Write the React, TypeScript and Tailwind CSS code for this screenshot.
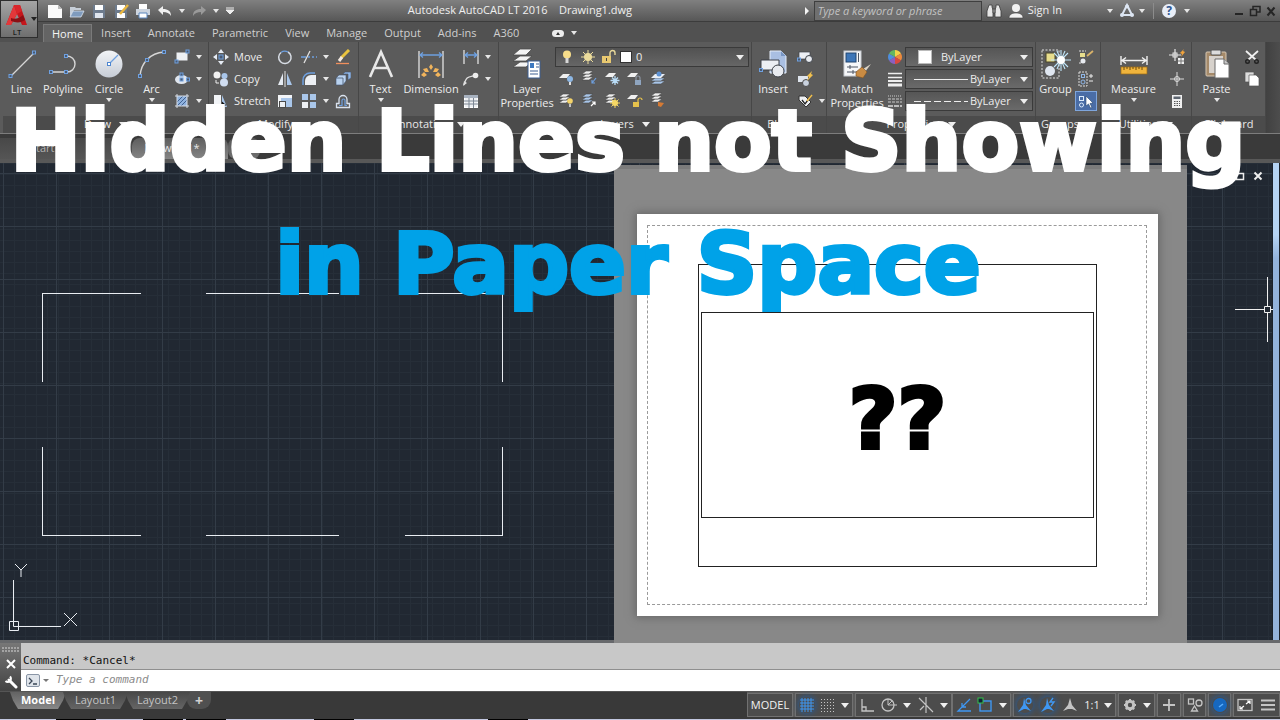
import type { ReactNode } from "react";

const blue = "#6ea0e0";
const pale = "#d9e2ee";

function Svg({ w = 16, h = 16, children }: { w?: number; h?: number; children: ReactNode }) {
  return (
    <svg width={w} height={h} viewBox={`0 0 ${w} ${h}`} fill="none" className="shrink-0" aria-hidden="true">
      {children}
    </svg>
  );
}

function Caret() {
  return (
    <Svg w={6} h={4}>
      <path d="M0 0h6L3 4z" fill="#e6e6e6" />
    </Svg>
  );
}

function BigCaret() {
  return (
    <Svg w={8} h={5}>
      <path d="M0 0h8L4 5z" fill="#efefef" />
    </Svg>
  );
}

// small square grip used on most geometry icons
function Grip({ x, y }: { x: number; y: number }) {
  return <rect x={x - 1.5} y={y - 1.5} width="3" height="3" fill="#4b5a70" stroke={blue} />;
}

function Sheets({ y = 0, color = "#f0f0f0" }: { y?: number; color?: string }) {
  return (
    <g fill={color} stroke="#4a4a4a" strokeWidth=".6">
      <path d={`M1 ${y + 11}l4-3h7l-4 3z`} />
      <path d={`M1 ${y + 8}l4-3h7l-4 3z`} />
      <path d={`M1 ${y + 5}l4-3h7l-4 3z`} />
    </g>
  );
}

/* ---------- large ribbon icons ---------- */

const LineIcon = (
  <Svg w={30} h={30}>
    <path d="M4 27L27 4" stroke="#d6d6d6" strokeWidth="1.3" />
    <Grip x={3.5} y={27} />
    <Grip x={27} y={3.5} />
  </Svg>
);

const PolylineIcon = (
  <Svg w={30} h={30}>
    <path d="M3 23h16a8 8 0 0 0 0-16" stroke="#d6d6d6" strokeWidth="1.4" />
    <Grip x={3} y={23} />
    <Grip x={18} y={23} />
    <Grip x={18} y={7} />
  </Svg>
);

const CircleIcon = (
  <Svg w={30} h={30}>
    <defs>
      <linearGradient id="disc" x1="0" y1="0" x2="0" y2="1">
        <stop offset="0" stopColor="#f2f4f7" />
        <stop offset="1" stopColor="#c6ccd6" />
      </linearGradient>
    </defs>
    <circle cx="15" cy="15" r="13.5" fill="url(#disc)" />
    <path d="M15 15l9-9" stroke={blue} strokeWidth="1.2" />
    <rect x="13.5" y="13.5" width="3" height="3" fill="#fff" stroke="#4d86d0" />
  </Svg>
);

const ArcIcon = (
  <Svg w={30} h={30}>
    <path d="M3 27C4 14 13 4 27 3" stroke="#d6d6d6" strokeWidth="1.4" />
    <Grip x={3} y={27} />
    <Grip x={10} y={11} />
    <Grip x={27} y={3} />
  </Svg>
);

const TextIcon = (
  <Svg w={28} h={30}>
    <path d="M3 28L14 3l11 25M7 19h14" stroke="#e8e8e8" strokeWidth="2.6" />
  </Svg>
);

const DimensionIcon = (
  <Svg w={30} h={30}>
    <path d="M3 2v27M27 2v27" stroke="#d8d8d8" strokeWidth="1.4" />
    <path d="M4 6h22M7 3.500L4 6l3 2.500M23 3.500L26 6l-3 2.500" stroke={blue} strokeWidth="1.3" />
    <g fill="#f1b45c">
      <path d="M13 18l2-3 2 3-2 3zM7 20l4-1 2 4-4 0zM23 20l-4-1-2 4 4 0zM5 26l3-3 3 3-3 2zM25 26l-3-3-3 3 3 2z" />
    </g>
  </Svg>
);

const LayerPropsIcon = (
  <Svg w={32} h={32}>
    <g fill="#f4f4f4" stroke="#4a4a4a" strokeWidth=".8">
      <path d="M2 19l7-5h12l-6 5z" />
      <path d="M2 13l7-5h12l-6 5z" />
      <path d="M2 7l7-6h12l-6 6z" />
    </g>
    <rect x="17" y="13" width="12" height="17" fill="#fff" stroke="#3c5f92" />
    <rect x="19" y="15" width="4" height="5" fill="#3c78c0" />
    <path d="M25 16h3M25 19h3M19 23h8M19 26h8" stroke="#3c5f92" strokeWidth="1.200" />
  </Svg>
);

const InsertIcon = (
  <Svg w={30} h={30}>
    <path d="M12 2h11l5 5v17H12z" fill="#a9bfe2" stroke="#e5edf8" />
    <path d="M23 2v5h5" fill="#7896c4" />
    <path d="M3 11h18v10H3z" fill="#eceff4" stroke="#3c4148" />
    <circle cx="20" cy="22" r="6" fill="#e8ebf0" stroke="#3c4148" />
    <Grip x={3} y={21} />
  </Svg>
);

const MatchIcon = (
  <Svg w={30} h={30}>
    <rect x="2" y="2" width="17" height="25" fill="#f6f7f9" stroke="#c8ccd2" />
    <rect x="4" y="4" width="10" height="9" fill="#3d76b8" stroke="#20446f" />
    <path d="M16.500 4v9M5 18h11M5 23h10M8 16v4M11 21v4" stroke="#4d5562" />
    <path d="M29 15l-8 5 2 3z" fill="#d9d2c5" />
    <path d="M14 23l6-5 5 5-4 6-7-2z" fill="#c98b43" stroke="#7c5020" strokeWidth=".6" />
  </Svg>
);

const GroupIcon = (
  <Svg w={30} h={30}>
    <rect x="1" y="1" width="17" height="28" stroke="#e0e0e0" strokeDasharray="2 1.500" />
    <rect x="5" y="4" width="9" height="9" fill="#e7dd8d" stroke="#49452a" />
    <circle cx="9" cy="22" r="5" fill="#dfe6f0" />
    <g stroke="#bfe6fb" strokeWidth="1.100">
      <path d="M20 1v21M10 11h20M13 4l14 14M27 4L13 18M16 2l8 18M24 2l-8 18" />
    </g>
    <circle cx="20" cy="11" r="4" fill="#fff" />
  </Svg>
);

const MeasureIcon = (
  <Svg w={30} h={30}>
    <path d="M2 7v9M28 7v9M3 11.500h24M7 8.500l-4 3 4 3M23 8.500l4 3-4 3" stroke="#f0f0f0" strokeWidth="1.400" />
    <rect x="2" y="18" width="26" height="7" fill="#f0b43c" stroke="#9c6a14" strokeWidth=".7" />
    <path d="M5 18v3M8 18v2M11 18v3M14 18v2M17 18v3M20 18v2M23 18v3" stroke="#6d4a0c" />
  </Svg>
);

const PasteIcon = (
  <Svg w={30} h={30}>
    <rect x="4" y="3" width="20" height="24" rx="1" fill="#a58a6a" stroke="#d7c8b4" />
    <rect x="9" y="1" width="10" height="5" rx="1" fill="#dcdcdc" stroke="#555" />
    <path d="M7 7h14v17H7z" fill="#d7d2cc" />
    <path d="M13 10h9l5 5v14H13z" fill="#fff" stroke="#6b6b6b" />
    <path d="M22 10v5h5" fill="#c9c9c9" stroke="#6b6b6b" />
  </Svg>
);

/* ---------- small ribbon icons ---------- */

const RectSmall = (
  <Svg>
    <rect x="2.500" y="3.500" width="11" height="8" fill="#edf0f4" />
    <Grip x={2.5} y={12.5} />
    <Grip x={13.5} y={2.5} />
  </Svg>
);
const EllipseSmall = (
  <Svg>
    <ellipse cx="7.500" cy="8.500" rx="6.500" ry="4.500" fill="#dfe5ee" />
    <Grip x={7.5} y={8.5} />
    <Grip x={7.5} y={3.5} />
    <Grip x={14} y={8.5} />
  </Svg>
);
const HatchSmall = (
  <Svg>
    <rect x="3" y="3" width="10" height="10" fill="#8fb2df" />
    <path d="M3 9l6-6M3 13L13 3M7 13l6-6" stroke="#41618f" />
    <path d="M3 1v14M13 1v14M1 3h14M1 13h14" stroke="#d8dde5" />
  </Svg>
);
const MoveSmall = (
  <Svg>
    <path d="M8 0l3 4H5zM8 16l3-4H5zM0 8l4-3v6zM16 8l-4-3v6z" fill="#e7edf5" />
    <rect x="6" y="6" width="4" height="4" fill="#4b5a70" stroke={blue} />
  </Svg>
);
const CopySmall = (
  <Svg>
    <circle cx="4" cy="4" r="3.500" fill="#f2f2f2" />
    <circle cx="11.500" cy="5" r="3" fill="#a9c6ea" />
    <circle cx="11" cy="11.500" r="4" fill="#cfdcf0" />
    <path d="M3 9v3h3" stroke="#f0f0f0" />
  </Svg>
);
const StretchSmall = (
  <Svg>
    <path d="M1 2h7v12H1z" fill="#f2f4f7" />
    <path d="M9 2l5 12H9z" fill="#a9c6ea" />
    <path d="M3 11h6V8.500l4 3.500-4 3.500V13H3z" fill="#111" />
  </Svg>
);
const RotateSmall = (
  <Svg>
    <path d="M4 3.500a6.200 6.200 0 1 0 7-.5" stroke="#d8dde5" strokeWidth="1.500" />
    <path d="M4 3.500c2-1.500 5-1.500 7-.5" stroke={blue} strokeWidth="1.200" />
  </Svg>
);
const TrimSmall = (
  <Svg w={18}>
    <path d="M1 8h5M8 8h2M12 8h2M16 8h1" stroke={blue} strokeWidth="1.500" />
    <path d="M4 14L10 2" stroke="#e4e4e4" strokeWidth="1.200" />
  </Svg>
);
const EraseSmall = (
  <Svg>
    <path d="M14 1L6 9" stroke="#e9c33e" strokeWidth="3" />
    <path d="M7 8l-3 4" stroke="#f3e9e2" strokeWidth="3" />
    <path d="M1 14.500h13" stroke="#f08f5c" strokeWidth="1.300" />
  </Svg>
);
const MirrorSmall = (
  <Svg>
    <path d="M6 2v12H1z" fill="#e6ebf2" />
    <path d="M10 2v12h5z" fill="#a9c6ea" />
    <path d="M8 0v16" stroke="#e4e4e4" />
  </Svg>
);
const FilletSmall = (
  <Svg>
    <path d="M2 14V9a7 7 0 0 1 7-7h5" stroke={blue} strokeWidth="1.500" />
    <path d="M4 14V10a6 6 0 0 1 6-6h5v10z" fill="#edf0f4" />
  </Svg>
);
const ExplodeSmall = (
  <Svg>
    <path d="M1 7l3-3h7v6l-3 4H1z" fill="#b9d2ef" stroke="#45566e" strokeWidth=".6" />
    <path d="M8 3l2-2h6v6l-3 2V3z" fill="#8fb6e6" stroke="#45566e" strokeWidth=".6" />
    <path d="M1 7h7v7" stroke="#45566e" strokeWidth=".8" />
  </Svg>
);
const ScaleSmall = (
  <Svg>
    <path d="M1 2h14v12H1z" fill="#a9c6ea" />
    <path d="M1 2h14v3H4v9H1z" fill="#f2f4f7" />
    <rect x="2.500" y="8.500" width="6" height="6" fill="#edf0f4" stroke="#4a4a4a" />
  </Svg>
);
const ArraySmall = (
  <Svg>
    <rect x="1" y="1" width="6" height="6" fill="#a9c6ea" />
    <rect x="9" y="1" width="6" height="6" fill="#a9c6ea" />
    <rect x="1" y="9" width="6" height="6" fill="#edf0f4" />
    <rect x="9" y="9" width="6" height="6" fill="#a9c6ea" />
  </Svg>
);
const OffsetSmall = (
  <Svg>
    <path d="M1.500 14.500v-4H4V6.500a4 4 0 0 1 8 0v4h2.500v4z" stroke={pale} strokeWidth="1.300" />
    <path d="M4 12.500h3V7.500a1.500 1.500 0 0 1 3 0v5h2" stroke={blue} strokeWidth="1.200" />
  </Svg>
);
const DimSmall = (
  <Svg>
    <path d="M1 1v14M15 1v14" stroke="#e0e0e0" strokeWidth="1.300" />
    <path d="M2 6h12M5 3.500L2 6l3 2.500M11 3.500L14 6l-3 2.500" stroke={blue} strokeWidth="1.300" />
  </Svg>
);
const LeaderSmall = (
  <Svg>
    <path d="M1 14c2-8 4-8 9-9" stroke="#e0e0e0" strokeWidth="1.300" />
    <path d="M0 15l1-5 3 2z" fill="#e0e0e0" />
    <circle cx="12.500" cy="4.500" r="2.800" fill="#eee" />
  </Svg>
);
const TableSmall = (
  <Svg>
    <rect x="1.500" y="2.500" width="13" height="12" fill="#eef0f3" stroke="#fff" />
    <rect x="1" y="2" width="14" height="3" fill="#a7b1bf" />
    <path d="M1 8h14M1 11h14M6 5v10M10.500 5v10" stroke="#7d8794" />
  </Svg>
);

const LayerOff = (
  <Svg>
    <path d="M1 8l4-4h7l-3 4z" fill="#f0f0f0" />
    <circle cx="12" cy="9" r="3" fill="#8db7e4" />
    <path d="M12 12v3" stroke="#ddd" strokeWidth="2" />
  </Svg>
);
const LayerIso = (
  <Svg>
    <Sheets y={-1} />
    <path d="M15 8l-4 5M11 10v3h3" stroke={blue} strokeWidth="1.200" />
  </Svg>
);
const LayerFreeze = (
  <Svg>
    <path d="M1 7l4-4h7l-3 4z" fill="#f0f0f0" />
    <path d="M11 6v9M6.500 10.500h9M8 7.500l6 6M14 7.500l-6 6" stroke="#b9dcf6" strokeWidth="1.300" />
  </Svg>
);
const LayerLock = (
  <Svg>
    <path d="M0 7l4-4h7l-3 4z" fill="#f0f0f0" />
    <path d="M9 10V8a2 2 0 0 1 4 0v2" stroke="#8a93a0" strokeWidth="1.200" />
    <rect x="8" y="10" width="6" height="5" fill="#8fa5c0" />
  </Svg>
);
const LayerCurrent = (
  <Svg>
    <g fill="#a9c6ea" stroke="#4a4a4a" strokeWidth=".6">
      <path d="M1 14l4-3h10l-4 3z" />
      <path d="M1 11l4-3h10l-4 3z" />
    </g>
    <path d="M1 8l4-4h10l-4 4z" fill="#e9eef5" />
    <circle cx="9" cy="4" r="2.500" fill="#5d92d4" />
  </Svg>
);
const LayerOn = (
  <Svg>
    <Sheets />
    <circle cx="12" cy="9" r="2.800" fill="#f3d36a" />
    <path d="M12 12v3" stroke="#ddd" strokeWidth="1.600" />
  </Svg>
);
const LayerUniso = (
  <Svg>
    <Sheets color="#a9c6ea" />
    <path d="M10 14l4-4M11 10h3v3" stroke="#fff" strokeWidth="1.200" />
  </Svg>
);
const LayerThaw = (
  <Svg>
    <Sheets />
    <circle cx="11" cy="11" r="3" fill="#f6d864" />
    <path d="M11 6v10M6 11h10M7.500 7.500l7 7M14.500 7.500l-7 7" stroke="#f6d864" />
  </Svg>
);
const LayerUnlock = (
  <Svg>
    <path d="M0 7l4-4h7l-3 4z" fill="#f0f0f0" />
    <path d="M11 10V8a2 2 0 0 1 4 0" stroke="#e6c24c" strokeWidth="1.200" />
    <rect x="6" y="10" width="6" height="5" fill="#e6c24c" />
  </Svg>
);
const LayerMatch = (
  <Svg>
    <Sheets y={-1} />
    <path d="M8 10l6 1-3 4-3-1z" fill="#d57a34" />
  </Svg>
);

const BlockCreate = (
  <Svg>
    <rect x="2" y="3" width="11" height="7" fill="#eceff4" stroke="#3c4148" strokeWidth=".7" />
    <circle cx="12" cy="10" r="3.500" fill="#e8ebf0" stroke="#3c4148" />
    <Grip x={2} y={10.5} />
  </Svg>
);
const BlockEdit = (
  <Svg>
    <rect x="1" y="5" width="10" height="6" fill="#dfe5ee" />
    <circle cx="9" cy="12" r="3.500" fill="#c9d2df" stroke="#4a4a4a" />
    <path d="M15 0l-5 5 2 1-2 4 6-6-2-1z" fill="#f2c14e" />
  </Svg>
);
const BlockAttr = (
  <Svg>
    <path d="M2 3h6l6 6-5 5-7-7z" fill="#eef0f3" stroke="#333" />
    <path d="M5 7l3 4 6-8" stroke="#222" strokeWidth="1.300" />
    <path d="M15 2l-5 6" stroke="#f2c14e" strokeWidth="1.500" />
  </Svg>
);

const GroupEdit = (
  <Svg>
    <path d="M1 2h7M1 14h2" stroke="#ddd" strokeDasharray="2 1" />
    <rect x="2" y="4" width="5" height="4" fill="#e7dd8d" />
    <circle cx="5" cy="12" r="2.500" fill="#e8ebf0" />
    <path d="M15 2L9 7" stroke="#d8b26a" strokeWidth="1.800" />
  </Svg>
);
const Ungroup = (
  <Svg>
    <rect x="1" y="1" width="8" height="14" stroke="#ddd" strokeDasharray="2 1" />
    <rect x="3.500" y="3.500" width="3" height="3" stroke="#8fb6e6" />
    <circle cx="5" cy="11" r="2" stroke="#8fb6e6" />
    <path d="M11 5h4M13 3v4M11 10h4" stroke="#eee" />
  </Svg>
);
const GroupSelect = (
  <Svg>
    <rect x="1.500" y="3.500" width="4" height="4" stroke="#dcebfa" />
    <circle cx="3.500" cy="12" r="2" stroke="#dcebfa" />
    <path d="M8 3l7 7-3 .5 2 4-1.500.5-2-4L8 13z" fill="#fff" stroke="#29486f" strokeWidth=".6" />
  </Svg>
);
const QuickCalc = (
  <Svg>
    <path d="M0 6h12M6 0v12" stroke="#e6e6e6" strokeWidth="1.200" />
    <rect x="4" y="4" width="4" height="4" stroke="#e6e6e6" />
    <path d="M15 0l-4 4 2 1-1 3 4-5-2-1z" fill="#f2a33c" />
    <rect x="9" y="9" width="6" height="6" fill="#eee" />
    <path d="M9 12h6M12 9v6" stroke="#777" />
  </Svg>
);
const PointIcon = (
  <Svg>
    <path d="M1 8h14M8 1v14" stroke="#dcdcdc" />
    <circle cx="8" cy="8" r="2.500" stroke="#dcdcdc" />
  </Svg>
);
const CalcIcon = (
  <Svg>
    <rect x="3" y="2" width="10" height="13" fill="#f0f0f0" />
    <rect x="4.500" y="3.500" width="7" height="2.500" fill="#5d6570" />
    <path d="M5 8.500h6M5 10.500h6M5 12.500h6" stroke="#555" strokeDasharray="1.500 1" />
  </Svg>
);
const CutIcon = (
  <Svg>
    <path d="M2 2l10 9M14 2L4 11" stroke="#f0f0f0" strokeWidth="1.800" />
    <circle cx="3.500" cy="12.500" r="1.800" stroke="#222" strokeWidth="1.400" />
    <circle cx="12.500" cy="12.500" r="1.800" stroke="#222" strokeWidth="1.400" />
  </Svg>
);
const CopyClip = (
  <Svg>
    <path d="M1 1h9v10H1z" fill="#dcdcdc" stroke="#555" strokeWidth=".7" />
    <path d="M5 4h7l3 3v8H5z" fill="#fff" stroke="#555" strokeWidth=".7" />
  </Svg>
);

/* ---------- ribbon building blocks ---------- */

function Panel({ title, width, caret = true, corner, children }: {
  title: string;
  width: string;
  caret?: boolean;
  corner?: boolean;
  children: ReactNode;
}) {
  return (
    <section className={`flex shrink-0 flex-col border-r border-[#474747] ${width}`}>
      <div className="flex h-[74px] pt-1">{children}</div>
      <div className="flex h-[17px] items-center justify-center gap-2 bg-[#4b4b4b] text-[#e8e8e8]">
        <span className={corner ? "ml-auto" : ""}>{title}</span>
        {caret && <BigCaret />}
        {corner && (
          <span className="mr-1 ml-auto">
            <Svg w={8} h={8}>
              <path d="M1 1l5 5M7 3v4H3" stroke="#ddd" />
            </Svg>
          </span>
        )}
      </div>
    </section>
  );
}

function Big({ label, icon, width, caret }: { label: string; icon: ReactNode; width: string; caret?: boolean }) {
  return (
    <button type="button" className={`flex shrink-0 flex-col items-center text-center leading-[14px] text-[#ededed] ${width}`}>
      <span className="flex h-9 items-center">{icon}</span>
      <span>{label}</span>
      {caret && <span className="flex h-2 items-center"><Caret /></span>}
    </button>
  );
}

function Small({ label, icon, caret, on }: { label: string; icon: ReactNode; caret?: boolean; on?: boolean }) {
  return (
    <button type="button" aria-label={label} className="flex h-[22px] items-center">
      <span className={`flex h-5 w-[22px] items-center justify-center ${on ? "border border-[#7fa6dc] bg-[#4a6da6]" : ""}`}>{icon}</span>
      {caret && <span className="flex w-3 justify-center"><Caret /></span>}
    </button>
  );
}

function PropSelect({ label, swatch }: { label: string; swatch: ReactNode }) {
  return (
    <label className="flex h-[20px] items-center border border-[#3a3a3a] bg-linear-to-b from-[#565656] to-[#6a6a6a] pr-1 text-[#ededed]">
      {swatch}
      <select aria-label={label} className="min-w-0 flex-1 appearance-none bg-transparent outline-none">
        <option>ByLayer</option>
      </select>
      <BigCaret />
    </label>
  );
}

const menuTabs = ["Insert", "Annotate", "Parametric", "View", "Manage", "Output", "Add-ins", "A360"];

function TitleBar() {
  return (
    <div className="flex h-[22px] items-center border-b border-[#3c3c3c] bg-linear-to-b from-[#808080] to-[#575757] text-[#f0f0f0]">
      <div className="flex items-center pl-[6px]">
        <QatButton label="New"><path d="M1 2h10l4 4v9H1z" fill="#fafafa" /><path d="M11 2v4h4" fill="#bbb" /></QatButton>
        <QatButton label="Open"><path d="M1 4h5l1 1h5v2H5l-4 7z" fill="#c6ced8" /><path d="M4 8h11l-3 6H1z" fill="#7f9bbd" stroke="#d9e2ee" strokeWidth=".8" /></QatButton>
        <QatButton label="Save"><path d="M2 2h12v13H2z" fill="#6d7b8d" /><path d="M4 2h8v5H4z" fill="#fff" /><path d="M4 10h8v5H4z" fill="#dfe5ee" /></QatButton>
        <QatButton label="Save As"><path d="M2 2h12v13H2z" fill="#6d7b8d" /><path d="M4 2h8v5H4zM4 10h8v5H4z" fill="#fff" /><path d="M15 2l-8 9" stroke="#e9b63e" strokeWidth="2.500" /></QatButton>
        <QatButton label="Plot"><path d="M4 1h8v5H4z" fill="#fff" /><path d="M1 6h14v6H1z" fill="#cdd5df" /><path d="M4 10h8v5H4z" fill="#fff" stroke="#5b86bd" /></QatButton>
        <QatButton label="Undo"><path d="M1 7l5-4v3c5 0 8 2 8 7-2-3-4-4-8-4v3z" fill="#f0f0f0" /></QatButton>
        <span className="flex w-3 justify-center"><Caret /></span>
        <QatButton label="Redo"><path d="M15 7l-5-4v3c-5 0-8 2-8 7 2-3 4-4 8-4v3z" fill="#9a9a9a" /></QatButton>
        <span className="flex w-3 justify-center"><Caret /></span>
        <button type="button" aria-label="Customize toolbar" className="flex w-4 justify-center">
          <Svg w={8} h={8}><path d="M0 1h8M0 3h8l-4 4z" stroke="#eee" fill="#eee" /></Svg>
        </button>
      </div>
      <h2 className="flex-1 text-center whitespace-pre">Autodesk AutoCAD LT 2016    Drawing1.dwg</h2>
      <Svg w={12} h={10}><path d="M3 1l4 4-4 4z" fill="#f4f4f4" /></Svg>
      <input
        aria-label="Search"
        placeholder="Type a keyword or phrase"
        className="h-5 w-[168px] border border-[#3f3f3f] bg-[#6f6f6f] px-[3px] italic outline-none placeholder:text-[#c2c2c2]"
      />
      <button type="button" aria-label="Search" className="ml-1 flex w-4 justify-center">
        <Svg><path d="M3 2h3v2l1 3v7H1V8zM10 2h3l2 6v6H9V7l1-3zM7 6h2v4H7z" fill="#e6e6e6" stroke="#3c3c3c" strokeWidth=".8" /></Svg>
      </button>
      <button type="button" className="ml-[6px] flex items-center gap-1">
        <Svg><circle cx="8" cy="5" r="4" fill="#f2f2f2" /><path d="M1 15c0-4 4-5 7-5s7 1 7 5z" fill="#f2f2f2" stroke="#444" strokeWidth=".6" /></Svg>
        Sign In
      </button>
      <span className="ml-[45px]"><Caret /></span>
      <button type="button" aria-label="Autodesk 360" className="ml-[6px] flex items-center gap-1">
        <Svg><path d="M8 2l5 10H3z" stroke="#dce5f2" strokeWidth="2" /><circle cx="8" cy="3.500" r="2" fill="#dce5f2" /><circle cx="3" cy="12" r="2" fill="#dce5f2" /><circle cx="13" cy="12" r="2" fill="#dce5f2" /></Svg>
        <Caret />
      </button>
      <span className="ml-2 h-4 border-l border-[#8c8c8c]" />
      <button type="button" className="ml-2 flex items-center gap-2" aria-label="Help">
        <span className="flex h-[14px] w-[14px] items-center justify-center rounded-full bg-[#e8eef8] text-[12px] leading-none font-bold text-[#2f5590]">?</span>
        <Caret />
      </button>
      <div className="ml-[44px] flex w-[46px] items-center justify-between pr-1">
        <button type="button" aria-label="Minimize"><Svg w={10} h={12}><path d="M1 9h8" stroke="#252525" strokeWidth="2" /></Svg></button>
        <button type="button" aria-label="Restore"><Svg w={12} h={12}><path d="M4 4V1.500h7V7H8M1.500 4.500h6v6h-6z" stroke="#252525" strokeWidth="1.500" /></Svg></button>
        <button type="button" aria-label="Close"><Svg w={10} h={12}><path d="M1.500 2.500l7 8M8.500 2.500l-7 8" stroke="#252525" strokeWidth="2" /></Svg></button>
      </div>
    </div>
  );
}

function QatButton({ label, children }: { label: string; children: ReactNode }) {
  return (
    <button type="button" aria-label={label} className="flex w-[22px] justify-center">
      <Svg>{children}</Svg>
    </button>
  );
}

function Header() {
  return (
    <header className="flex bg-[#515151]">
      <button
        type="button"
        aria-label="Application menu"
        className="flex h-[38px] w-[38px] shrink-0 items-center gap-[2px] border border-[#2e2e2e] bg-linear-to-b from-[#a5a5a5] to-[#6f6f6f] pl-1"
      >
        <span className="flex w-6 flex-col items-center text-[8px] leading-[9px] text-black">
          <Svg w={24} h={24}>
            <path d="M9 2h6l7 20h-5L12 11 6 22H1z" fill="#c4161c" />
            <path d="M9 2l3 9-6 11H1z" fill="#e2383a" />
            <path d="M6 15c4 2 9 0 12-3l2 5c-4 3-9 3-14 1z" fill="#8c0f14" />
            <path d="M9 2h6l2 6-5 3z" fill="#d8262b" />
          </Svg>
          LT
        </span>
        <Svg w={6} h={4}><path d="M0 0h6L3 4z" fill="#222" /></Svg>
      </button>
      <div className="min-w-0 flex-1">
        <TitleBar />
        <nav className="flex h-[20px] items-end gap-px pl-[5px] text-[#cfcfcf]">
          <button type="button" className="h-[18px] border border-b-0 border-[#7a7a7a] bg-[#646464] px-2 leading-[16px] text-[#f5f5f5]">Home</button>
          {menuTabs.map((t) => (
            <button key={t} type="button" className="h-[18px] px-2 leading-[18px]">{t}</button>
          ))}
          <button type="button" aria-label="Ribbon display" className="ml-6 flex h-[18px] items-center gap-[7px]">
            <span className="flex h-[7px] w-3 items-center justify-center rounded-sm bg-[#ededed]">
              <Svg w={4} h={3}><path d="M0 3h4L2 0z" fill="#333" /></Svg>
            </span>
            <Caret />
          </button>
        </nav>
      </div>
    </header>
  );
}

function Ribbon() {
  return (
    <div className="flex border-b border-[#7d7d7d] bg-[#5b5b5b] pl-[3px]">
      <Panel title="Draw" width="w-[206px]">
        <Big label="Line" icon={LineIcon} width="w-[37px]" />
        <Big label="Polyline" icon={PolylineIcon} width="w-[46px]" />
        <Big label="Circle" icon={CircleIcon} width="w-[46px]" caret />
        <Big label="Arc" icon={ArcIcon} width="w-[39px]" caret />
        <div>
          <Small label="Rectangle" icon={RectSmall} caret />
          <Small label="Ellipse" icon={EllipseSmall} caret />
          <Small label="Hatch" icon={HatchSmall} caret />
        </div>
      </Panel>

      <Panel title="Modify" width="w-[150px]">
        <div className="w-[65px] pl-1">
          <button type="button" className="flex h-[22px] items-center gap-[5px] text-[#ededed]">{MoveSmall}Move</button>
          <button type="button" className="flex h-[22px] items-center gap-[5px] text-[#ededed]">{CopySmall}Copy</button>
          <button type="button" className="flex h-[22px] items-center gap-[5px] text-[#ededed]">{StretchSmall}Stretch</button>
        </div>
        <div>
          <Small label="Rotate" icon={RotateSmall} />
          <Small label="Mirror" icon={MirrorSmall} />
          <Small label="Scale" icon={ScaleSmall} />
        </div>
        <div className="pl-[2px]">
          <Small label="Trim" icon={TrimSmall} caret />
          <Small label="Fillet" icon={FilletSmall} caret />
          <Small label="Array" icon={ArraySmall} caret />
        </div>
        <div>
          <Small label="Erase" icon={EraseSmall} />
          <Small label="Explode" icon={ExplodeSmall} />
          <Small label="Offset" icon={OffsetSmall} />
        </div>
      </Panel>

      <Panel title="Annotation" width="w-[140px]">
        <Big label="Text" icon={TextIcon} width="w-[43px]" caret />
        <Big label="Dimension" icon={DimensionIcon} width="w-[58px]" />
        <div>
          <Small label="Linear" icon={DimSmall} caret />
          <Small label="Leader" icon={LeaderSmall} caret />
          <Small label="Table" icon={TableSmall} />
        </div>
      </Panel>

      <Panel title="Layers" width="w-[253px]">
        <Big label="Layer Properties" icon={LayerPropsIcon} width="w-[56px]" />
        <div className="flex-1 pr-[2px]">
          <label className="mt-px flex h-[20px] items-center gap-1 border border-[#3a3a3a] bg-linear-to-b from-[#525252] to-[#666666] px-1 text-[#ededed]">
            <Svg><circle cx="7" cy="5.500" r="4" fill="#f7dd8a" /><path d="M5.500 9h3v5h-3z" fill="#d8d8d8" /></Svg>
            <Svg><circle cx="8" cy="8" r="4" fill="#ecdc9c" /><path d="M8 1v14M1 8h14M3 3l10 10M13 3L3 13" stroke="#ecdc9c" /></Svg>
            <Svg><path d="M10 7V4a2.500 2.500 0 0 1 5 0v2" stroke="#e8d89a" strokeWidth="1.400" /><rect x="2" y="7" width="9" height="7" fill="#e8c870" /><path d="M6.500 9v3" stroke="#444" /></Svg>
            <span className="h-3 w-3 border border-[#333] bg-white" />
            <select aria-label="Layer" className="min-w-0 flex-1 appearance-none bg-transparent outline-none">
              <option>0</option>
            </select>
            <BigCaret />
          </label>
          <div className="grid w-[115px] grid-cols-5">
            <Small label="Off" icon={LayerOff} />
            <Small label="Isolate" icon={LayerIso} />
            <Small label="Freeze" icon={LayerFreeze} />
            <Small label="Lock" icon={LayerLock} />
            <Small label="Make Current" icon={LayerCurrent} />
            <Small label="Turn All On" icon={LayerOn} />
            <Small label="Unisolate" icon={LayerUniso} />
            <Small label="Thaw All" icon={LayerThaw} />
            <Small label="Unlock" icon={LayerUnlock} />
            <Small label="Match Layer" icon={LayerMatch} />
          </div>
        </div>
      </Panel>

      <Panel title="Block" width="w-[75px]">
        <Big label="Insert" icon={InsertIcon} width="w-[42px]" />
        <div>
          <Small label="Create" icon={BlockCreate} />
          <Small label="Edit" icon={BlockEdit} />
          <Small label="Edit Attributes" icon={BlockAttr} caret />
        </div>
      </Panel>

      <Panel title="Properties" width="w-[209px]" corner>
        <Big label="Match Properties" icon={MatchIcon} width="w-[60px]" />
        <div className="w-[18px]">
          <span className="flex h-[22px] items-center">
            <Svg>
              <path d="M8 8V1a7 7 0 0 1 6 3.500z" fill="#f0d34a" />
              <path d="M8 8l6-3.500a7 7 0 0 1 0 7z" fill="#ef8a3c" />
              <path d="M8 8l6 3.500A7 7 0 0 1 8 15z" fill="#d8493f" />
              <path d="M8 8v7a7 7 0 0 1-6-3.500z" fill="#8b5fc0" />
              <path d="M8 8l-6 3.500a7 7 0 0 1 0-7z" fill="#4f8ede" />
              <path d="M8 8L2 4.500A7 7 0 0 1 8 1z" fill="#63b760" />
            </Svg>
          </span>
          <span className="flex h-[22px] items-center">
            <Svg><path d="M1 2.500h14M1 6.500h14" stroke="#eee" strokeWidth="1.500" /><path d="M1 10h14" stroke="#eee" strokeWidth="2" /><path d="M1 14h14" stroke="#eee" strokeWidth="3" /></Svg>
          </span>
          <span className="flex h-[22px] items-center">
            <Svg><path d="M1 3h14" stroke="#ccc" strokeDasharray="1 1" /><path d="M1 6h14M1 9h14" stroke="#ccc" strokeDasharray="3 1" /><path d="M1 13h14" stroke="#ddd" strokeDasharray="5 1" strokeWidth="1.500" /></Svg>
          </span>
        </div>
        <div className="flex w-[128px] flex-col gap-[2px] pt-px">
          <PropSelect label="Color" swatch={<span className="mr-[9px] ml-3 h-[14px] w-[14px] border border-[#bbb] bg-white" />} />
          <PropSelect label="Lineweight" swatch={<span className="mr-[2px] ml-2 w-[54px] border-t border-[#eee]" />} />
          <PropSelect
            label="Linetype"
            swatch={<span className="mr-[2px] ml-2"><Svg w={54} h={1}><path d="M0 .5h54" stroke="#eee" strokeDasharray="7 3" /></Svg></span>}
          />
        </div>
      </Panel>

      <Panel title="Groups" width="w-[65px]">
        <Big label="Group" icon={GroupIcon} width="w-[39px]" />
        <div>
          <Small label="Group Edit" icon={GroupEdit} />
          <Small label="Ungroup" icon={Ungroup} />
          <Small label="Group Selection" icon={GroupSelect} on />
        </div>
      </Panel>

      <Panel title="Utilities" width="w-[91px]">
        <Big label="Measure" icon={MeasureIcon} width="w-[65px]" caret />
        <div>
          <Small label="Quick Select" icon={QuickCalc} />
          <Small label="ID Point" icon={PointIcon} />
          <Small label="Calculator" icon={CalcIcon} />
        </div>
      </Panel>

      <Panel title="Clipboard" width="w-[74px]" caret={false}>
        <Big label="Paste" icon={PasteIcon} width="w-[49px]" caret />
        <div>
          <Small label="Cut" icon={CutIcon} />
          <Small label="Copy Clip" icon={CopyClip} />
        </div>
      </Panel>
      <div className="flex-1 bg-linear-to-r from-[#414141] to-[#4d4d4d]" />
    </div>
  );
}

function DocTabs() {
  return (
    <nav className="flex h-[29px] items-end border-b-4 border-[#585858] bg-[#3a3a3a] text-[#b4b4b4]">
      <button type="button" className="h-[21px] w-[132px] bg-linear-to-b from-[#484848] to-[#555555] pl-[30px] text-left">Start</button>
      <button type="button" className="h-[21px] w-[96px] rounded-t-[8px] bg-linear-to-b from-[#5e5e5e] to-[#858585] pr-4 text-[#e8e8e8]">Drawing1*</button>
      <button type="button" aria-label="New tab" className="h-[21px] w-8 rounded-[8px] bg-linear-to-b from-[#5a5a5a] to-[#707070]" />
    </nav>
  );
}

const gridBg =
  "bg-[#212832] bg-[linear-gradient(to_right,#333c47_1px,transparent_1px),linear-gradient(to_bottom,#333c47_1px,transparent_1px),linear-gradient(to_right,#262e38_1px,transparent_1px),linear-gradient(to_bottom,#262e38_1px,transparent_1px)] bg-[size:53px_53px,53px_53px,11px_11px,11px_11px] bg-[position:3px_0,0_10px,3px_0,0_0]";

function Canvas() {
  return (
    <main className={`relative z-10 flex-1 ${gridBg}`}>
      {/* model space geometry */}
      <svg className="absolute top-0 left-0" width="614" height="477" viewBox="0 163 614 477" fill="none">
        <g stroke="#e9edf2">
          <path d="M42 293.500h99M206 293.500h133M405 293.500h98M42 535.500h99M206 535.500h133M405 535.500h98" />
          <path d="M42.500 293v89M42.500 447v89M502.500 293v89M502.500 447v89" />
          <path d="M13.500 580v46.500H61M9.500 621.500h9v9h-9z" />
          <path d="M15 564l6 6 6-6M21 570v7M64 613l13 13M77 613l-13 13" />
        </g>
      </svg>

      {/* layout sheet */}
      <div className="absolute top-[2px] left-[614px] h-[478px] w-[573px] border-t-4 border-[#7b7b7b] bg-[#888888] pt-[45px] pl-[23px]">
        <div className="h-[402px] w-[521px] bg-white pt-[11px] pl-[10px] shadow-[0_0_8px_2px_#6a6a6a]">
          <div className="h-[380px] w-[500px] border border-dashed border-[#9a9a9a] pt-[38px] pl-[50px]">
            <div className="h-[303px] w-[399px] border border-[#222] px-[2px] pt-[47px]">
              <div className="flex h-[206px] items-center justify-center border border-[#222] pt-2 font-['DejaVu_Sans',sans-serif] text-[84px] leading-none font-bold text-black [-webkit-text-stroke:4px_#000]">
                ??
              </div>
            </div>
          </div>
        </div>
      </div>

      <div className="absolute top-0 right-0 h-full w-[8px] border-r border-l border-[#1b222b] bg-linear-to-b from-[#b5d3f3] from-15% to-[#93b3dc] to-20%" />
      <div className="absolute top-[5px] right-[17px] flex gap-2 text-[#eeeeee]">
        <button type="button" aria-label="Restore viewport"><Svg w={10} h={16}><path d="M1.500 5.500h7v6h-7z" stroke="#eee" strokeWidth="1.500" /></Svg></button>
        <button type="button" aria-label="Close viewport"><Svg w={10} h={16}><path d="M1.500 4.500l7 7M8.500 4.500l-7 7" stroke="#eee" strokeWidth="2" /></Svg></button>
      </div>
      <svg className="absolute top-[114px] right-0" width="46" height="66" viewBox="0 0 46 66" fill="none" stroke="#f0f0f0">
        <path d="M1 32.500h29M36 32.500h3M33.500 0v29M33.500 36v29M30.500 29.500h6v6h-6z" />
      </svg>
    </main>
  );
}

function CommandLine() {
  return (
    <section className="flex h-[51px] border-t-3 border-[#67696c] font-['DejaVu_Sans_Mono',monospace] text-[11px]">
      <div className="flex w-[21px] flex-col items-center justify-between bg-linear-to-b from-[#777] to-[#444] pt-1 pb-[2px]">
        <Svg w={17} h={5}><path d="M0 1h17M0 4h17" stroke="#b5b5b5" strokeWidth="1.500" strokeDasharray="2 1" /></Svg>
        <button type="button" aria-label="Close command line"><Svg w={10} h={10}><path d="M1 1l8 8M9 1l-8 8" stroke="#fff" strokeWidth="2" /></Svg></button>
        <button type="button" aria-label="Command settings"><Svg w={14} h={14}><path d="M5 5l7 7" stroke="#fff" strokeWidth="3" strokeLinecap="round" /><path d="M6 1.500a3 3 0 1 1-4.500 4.500" stroke="#fff" strokeWidth="2" /></Svg></button>
      </div>
      <div className="flex min-w-0 flex-1 flex-col">
        <p className="h-[27px] border-b border-[#8f8f8f] bg-[#c8c8c8] pt-[10px] pl-[2px] leading-[16px] text-[#111]">Command: *Cancel*</p>
        <label className="flex flex-1 items-center bg-white pl-[5px]">
          <span className="flex h-[13px] w-[14px] items-center justify-center rounded-[2px] border border-[#8a96a6] bg-[#dfe4ea]">
            <Svg w={10} h={8}><path d="M1 1l3 3-3 3M5 7h4" stroke="#3a4656" strokeWidth="1.300" /></Svg>
          </span>
          <span className="mx-[3px]"><Svg w={6} h={4}><path d="M0 0h6L3 3z" fill="#777" /></Svg></span>
          <input aria-label="Command" placeholder="Type a command" className="ml-1 flex-1 italic outline-none placeholder:text-[#8c8c8c]" />
        </label>
      </div>
    </section>
  );
}

const tabClip = "[clip-path:polygon(0_0,100%_0,calc(100%-3px)_50%,calc(100%-8px)_100%,8px_100%,3px_50%)]";

function LayoutTab({ label, active, width }: { label: string; active?: boolean; width: string }) {
  return (
    <button
      type="button"
      className={`-mr-[3px] flex h-[17px] items-center justify-center rounded-b-[4px] ${tabClip} ${width} ${
        active ? "bg-linear-to-b from-[#636363] to-[#888888] font-bold text-white" : "bg-linear-to-b from-[#484848] to-[#656565] text-[#c4c4c4]"
      }`}
    >
      {label}
    </button>
  );
}

function Cell({ children, width }: { children: ReactNode; width: string }) {
  return <div className={`flex h-6 items-center justify-around border border-[#717171] bg-[#4c4c4c] ${width}`}>{children}</div>;
}

function St({ label, children, glow }: { label: string; children: ReactNode; glow?: boolean }) {
  return (
    <button type="button" aria-label={label} className={glow ? "rounded-full shadow-[0_0_6px_#1d5ea8]" : ""}>
      <Svg>{children}</Svg>
    </button>
  );
}

const act = "#3f97f2";
const idle = "#c4c4c4";

function StatusBar() {
  return (
    <footer className="bg-[#393939]">
      <div className="flex h-[27px] items-start border-t border-[#555]">
        <div className="flex flex-1 pl-[10px]">
          <LayoutTab label="Model" active width="w-[56px]" />
          <LayoutTab label="Layout1" width="w-[65px]" />
          <LayoutTab label="Layout2" width="w-[65px]" />
          <button type="button" className="flex h-[17px] w-[24px] items-center justify-center rounded-b-[9px] bg-[#505050] text-[14px] font-bold text-[#d0d0d0]">+</button>
        </div>
        <div className="flex gap-[2px] bg-[#5c5c5c] pt-px">
          <Cell width="w-[46px]"><button type="button" className="text-[#f2f2f2]">MODEL</button></Cell>
          <Cell width="w-[58px]">
            <St label="Grid" glow><path d="M3 1v14M6 1v14M9 1v14M12 1v14M1 3h14M1 6h14M1 9h14M1 12h14" stroke={act} /></St>
            <St label="Snap"><path d="M1 2.500h14M1 5.500h14M1 8.500h14M1 11.500h14M1 14.500h14" stroke={idle} strokeDasharray="1 2" /></St>
            <BigCaret />
          </Cell>
          <div className="flex">
            <Cell width="w-[97px]">
              <St label="Ortho"><path d="M3 2v12h12M3 10h4v4" stroke={idle} strokeWidth="1.300" /></St>
              <St label="Polar"><circle cx="7" cy="8" r="6" stroke={idle} strokeWidth="1.300" /><path d="M7 2v6h9M7 8l4-4" stroke={idle} /></St>
              <BigCaret />
              <St label="Isodraft"><path d="M1 1l14 14M8 0v16M2 13l4-4" stroke={idle} strokeWidth="1.200" /></St>
              <BigCaret />
            </Cell>
            <Cell width="w-[59px]">
              <St label="Object Snap Tracking"><path d="M14 2L2 14h13M6 6v4h4" stroke={act} strokeWidth="1.300" /></St>
              <St label="Object Snap"><rect x="3" y="4" width="11" height="10" stroke={act} strokeWidth="1.400" /><rect x="1" y="1" width="5" height="5" fill="#123" stroke="#35c04a" /></St>
              <BigCaret />
            </Cell>
          </div>
          <Cell width="w-[103px]">
            <St label="Annotation Visibility" glow><path d="M7 1l2 7 5 6-5-2-2 0-6 3 5-7z" fill={act} /><circle cx="11.500" cy="4" r="2.500" stroke={act} strokeWidth="1.300" /></St>
            <St label="AutoScale" glow><path d="M7 1l2 7 5 6-5-2-2 0-6 3 5-7z" fill={act} /><path d="M13 1l-3 4h4l-3 4" stroke={act} strokeWidth="1.400" /></St>
            <St label="Annotation"><path d="M8 1l2 7 5 6-5-2H6l-5 2 5-6z" fill={idle} /></St>
            <button type="button" className="flex items-center gap-1 text-[#eee]">1:1<BigCaret /></button>
          </Cell>
          <Cell width="w-[37px]">
            <St label="Workspace"><circle cx="8" cy="8" r="3.700" stroke={idle} strokeWidth="3" /><path d="M8 2v2M8 12v2M2 8h2M12 8h2M3.800 3.800l1.400 1.400M10.800 10.800l1.400 1.400M12.200 3.800l-1.400 1.400M5.200 10.800l-1.400 1.400" stroke={idle} strokeWidth="2" /></St>
            <BigCaret />
          </Cell>
          <Cell width="w-[24px]"><St label="Annotation Monitor"><path d="M8 2v12M2 8h12" stroke={idle} strokeWidth="1.800" /></St></Cell>
          <Cell width="w-[23px]">
            <St label="Isolate Objects"><rect x="1.500" y="2" width="5" height="5" stroke={idle} strokeWidth="1.300" /><circle cx="12" cy="6" r="3" stroke={idle} strokeWidth="1.300" /><path d="M7.500 9l3 5h-6z" stroke={idle} strokeWidth="1.300" /></St>
          </Cell>
          <Cell width="w-[23px]"><St label="Hardware Acceleration" glow><circle cx="8" cy="8" r="7" fill="#1668c0" /><path d="M7 10l4-3" stroke="#5cb0ff" strokeWidth="1.500" /></St></Cell>
          <Cell width="w-[47px]">
            <St label="Clean Screen"><rect x="1" y="2.500" width="14" height="11" stroke={idle} strokeWidth="1.300" /><path d="M9 7l4-3M10 4h3v3M7 9l-4 3M3 9v3h3" stroke="#fff" strokeWidth="1.200" /></St>
            <St label="Customization"><path d="M1 3.500h14M1 8h14M1 12.500h14" stroke={idle} strokeWidth="1.800" /></St>
          </Cell>
        </div>
      </div>
      {/* edge of the desktop taskbar */}
      <div className="mt-px flex h-px bg-[#c3c8e0]">
        <span className="ml-[56px] w-10 bg-black" />
        <span className="ml-[47px] w-10 bg-black" />
        <span className="ml-[3px] w-10 bg-black" />
        <span className="ml-[88px] w-10 bg-black" />
        <span className="ml-[134px] w-10 bg-black" />
      </div>
    </footer>
  );
}

export default function App() {
  return (
    <div className="relative flex min-h-screen flex-col overflow-hidden bg-[#3a3a3a] font-['Open_Sans',sans-serif] text-[11px]">
      <Header />
      <Ribbon />
      <DocTabs />
      <Canvas />
      <CommandLine />
      <StatusBar />

      {/* caption over the whole window */}
      <h1 className="pointer-events-none absolute inset-x-0 top-[80px] z-20 pr-6 text-center font-['DejaVu_Sans',sans-serif] text-[84px] leading-[123px] font-bold whitespace-nowrap">
        <span className="block text-white [-webkit-text-stroke:4px_#fff]">Hidden Lines not Showing</span>
        <span className="block text-[#00a2e8] [-webkit-text-stroke:4px_#00a2e8]">in Paper Space</span>
      </h1>
    </div>
  );
}
